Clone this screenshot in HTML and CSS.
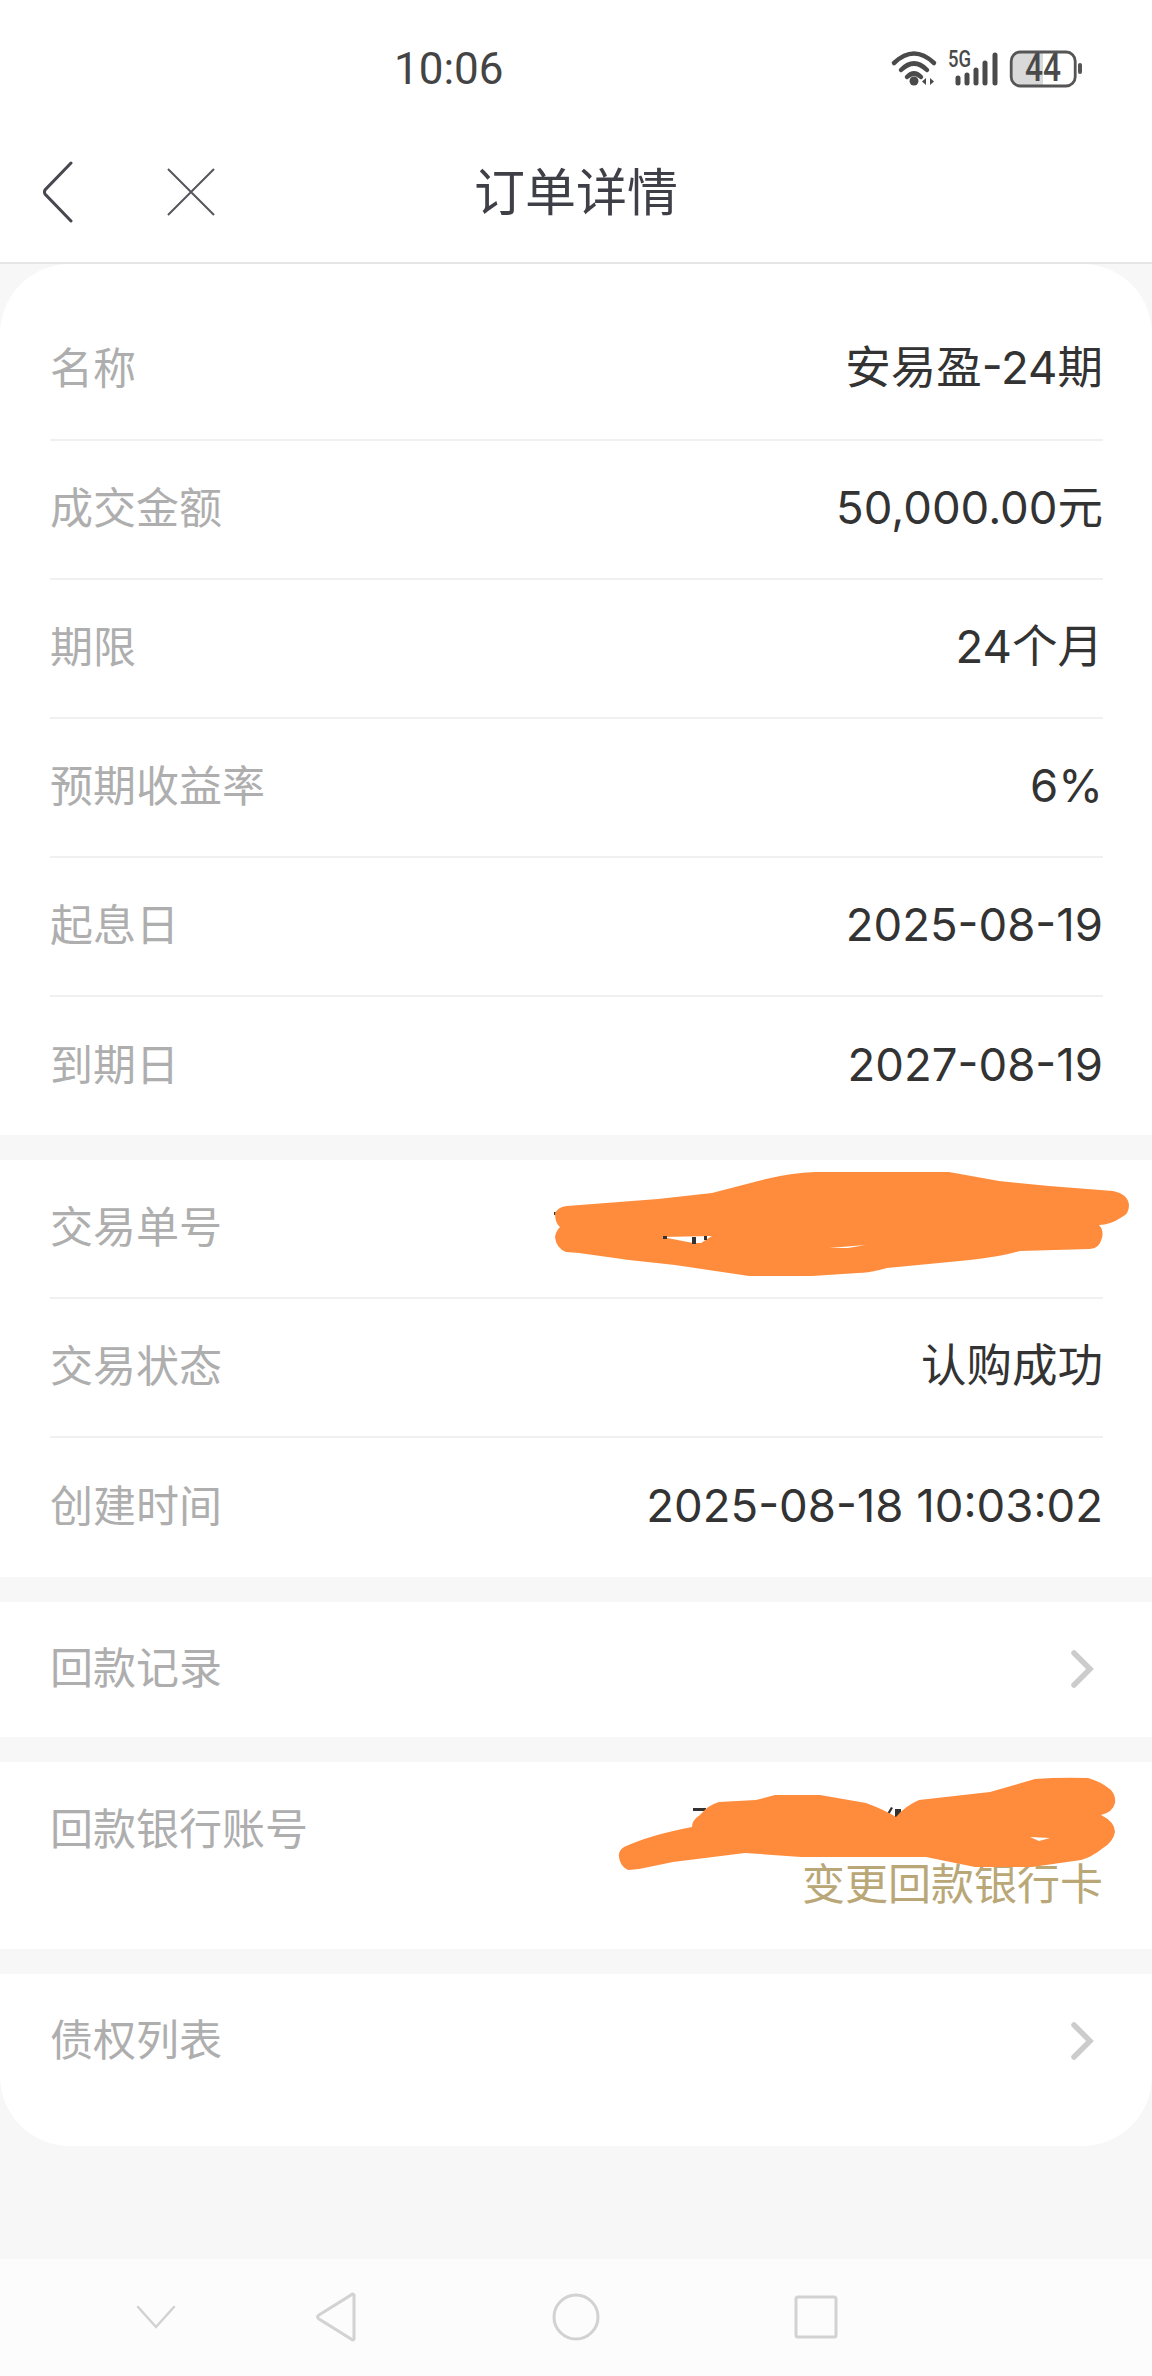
FILE: index.html
```html
<!DOCTYPE html>
<html lang="zh-CN">
<head>
  <meta charset="UTF-8">
  <meta name="viewport" content="width=device-width, initial-scale=1.0">
  <title>订单详情</title>
  <link rel="stylesheet" href="styles.css">
</head>
<body>
  <div class="page">
    <!-- status bar -->
    <div class="status-bar">
      <span class="clock">10:06</span>
      <svg class="status-icons" width="200" height="40" viewBox="0 0 200 40" xmlns="http://www.w3.org/2000/svg">
        <g fill="none" stroke="#4a4a4a" stroke-width="4.500" stroke-linecap="round">
          <path d="M3 14 Q23 -5 43 14"/>
          <path d="M10 21 Q23 8 36 21"/>
          <path d="M16 28 Q23 21 30 28"/>
        </g>
        <circle cx="23" cy="32" r="4.500" fill="#4a4a4a"/>
        <path d="M35 29v7l-4-3.500zM39 29v7l4-3.500z" fill="#4a4a4a"/>
        <text class="net-label" x="57" y="18" textLength="23" lengthAdjust="spacingAndGlyphs">5G</text>
        <g fill="none" stroke="#4a4a4a" stroke-width="5" stroke-linecap="round">
          <path d="M67 29v5M76 26v8M85 21v13M94 14v20M104 6v28"/>
        </g>
        <path d="M128 3h24v34h-24a8 8 0 0 1-8-8v-18a8 8 0 0 1 8-8z" fill="#d9d9d9"/>
        <rect x="120.200" y="3" width="64" height="34" rx="9" fill="none" stroke="#555" stroke-width="2.800"/>
        <rect x="187" y="14" width="4" height="11" rx="2" fill="#555"/>
        <text class="battery-label" x="152" y="32" text-anchor="middle" textLength="36" lengthAdjust="spacingAndGlyphs">44</text>
      </svg>
    </div>

    <!-- nav bar -->
    <div class="nav-bar">
      <div class="nav-left">
        <svg width="32" height="62" viewBox="0 0 32 62" xmlns="http://www.w3.org/2000/svg">
          <path d="M29 2 L3 29 Q2 31 3 33 L29 60" fill="none" stroke="#47474f" stroke-width="3" stroke-linecap="round"/>
        </svg>
        <svg class="nav-close" width="48" height="48" viewBox="0 0 48 48" xmlns="http://www.w3.org/2000/svg">
          <path d="M1 1 L47 47 M47 1 L1 47" stroke="#55555c" stroke-width="2"/>
        </svg>
      </div>
      <div class="nav-title">订单详情</div>
    </div>

    <!-- main card -->
    <div class="card">
      <div class="section section-first">
        <div class="row row-first"><span class="label">名称</span><span class="value">安易盈-24期</span></div>
        <div class="row"><span class="label">成交金额</span><span class="value">50,000.00元</span></div>
        <div class="row"><span class="label">期限</span><span class="value">24个月</span></div>
        <div class="row"><span class="label">预期收益率</span><span class="value">6%</span></div>
        <div class="row"><span class="label">起息日</span><span class="value">2025-08-19</span></div>
        <div class="row row-last"><span class="label">到期日</span><span class="value">2027-08-19</span></div>
      </div>
      <div class="section">
        <div class="row"><span class="label">交易单号</span></div>
        <div class="row"><span class="label">交易状态</span><span class="value">认购成功</span></div>
        <div class="row row-last"><span class="label">创建时间</span><span class="value">2025-08-18 10:03:02</span></div>
      </div>
      <div class="section">
        <div class="row row-last row-link">
          <span class="label">回款记录</span>
          <svg width="24" height="38" viewBox="0 0 24 38" xmlns="http://www.w3.org/2000/svg">
            <path d="M3 3 L19 19 L3 35" fill="none" stroke="#cccccc" stroke-width="5.500" stroke-linecap="round"/>
          </svg>
        </div>
      </div>
      <div class="section">
        <div class="row row-last row-bank">
          <span class="label">回款银行账号</span>
          <span class="change-link">变更回款银行卡</span>
        </div>
      </div>
      <div class="section section-end">
        <div class="row row-last row-link">
          <span class="label">债权列表</span>
          <svg width="24" height="38" viewBox="0 0 24 38" xmlns="http://www.w3.org/2000/svg">
            <path d="M3 3 L19 19 L3 35" fill="none" stroke="#cccccc" stroke-width="5.500" stroke-linecap="round"/>
          </svg>
        </div>
      </div>
    </div>

    <div class="spacer"></div>

    <!-- system nav -->
    <div class="sys-nav">
      <svg width="60" height="60" viewBox="0 0 60 60" xmlns="http://www.w3.org/2000/svg">
        <path d="M12 20 L30 40 L48 20" fill="none" stroke="#d2d2d2" stroke-width="2.500" stroke-linecap="round"/>
      </svg>
      <svg class="sys-gap-a" width="60" height="60" viewBox="0 0 60 60" xmlns="http://www.w3.org/2000/svg">
        <path d="M48 8 V52 Q47 54 45 52 L13 32 Q10 30 13 28 L45 8 Q47 6 48 8 Z" fill="none" stroke="#d2d2d2" stroke-width="3"/>
      </svg>
      <svg class="sys-gap-b" width="60" height="60" viewBox="0 0 60 60" xmlns="http://www.w3.org/2000/svg">
        <circle cx="30" cy="30" r="22" fill="none" stroke="#d2d2d2" stroke-width="3"/>
      </svg>
      <svg class="sys-gap-b" width="60" height="60" viewBox="0 0 60 60" xmlns="http://www.w3.org/2000/svg">
        <rect x="10" y="10" width="40" height="40" rx="2" fill="none" stroke="#d2d2d2" stroke-width="3"/>
      </svg>
    </div>

    <!-- hand drawn marks over the account numbers -->
    <svg class="scribbles" width="1152" height="2376" viewBox="0 0 1152 2376" xmlns="http://www.w3.org/2000/svg">
      <path d="M554 1212h8v3h-8zM693 1808h13v3h-13zM885 1817l6-10 2 1-6 10zM895 1809h6v8h-6z" fill="#333"/>
      <path class="scrib" d="M555 1213 Q558 1207 567 1206 L658 1199 L712 1193 L766 1179 Q790 1173 816 1172 L949 1172 L999 1181 L1049 1186 L1113 1191 Q1128 1194 1129 1205 Q1129 1214 1122 1217 Q1110 1225 1099 1225 Q1104 1230 1102 1238 Q1099 1249 1090 1249 L1020 1251 Q1000 1257 970 1260 L887 1268 Q870 1273 858 1273 L812 1276 L749 1276 L675 1265 L629 1260 L579 1253 L566 1252 Q556 1248 555 1237 Q556 1231 560 1227 Q555 1223 555 1213 Z"/>
      <path d="M662 1237 L712 1236 L701 1243 L693 1243 Z M829 1248 L866 1245 L848 1248 Z" fill="#fff"/>
      <path d="M663 1236h4v3h-4zM692 1237h4v7h-4zM704 1236h3v4h-3z" fill="#333"/>
      <path class="scrib" d="M619 1857 Q618 1851 624 1847 Q650 1835 692 1827 Q692 1820 700 1815 Q708 1805 719 1802 L756 1800 L775 1795 L820 1795 L866 1803 Q885 1810 896 1817 Q905 1806 919 1800 L990 1792 L1035 1779 Q1060 1777 1088 1778 Q1100 1781 1111 1790 Q1116 1796 1115 1803 Q1113 1812 1101 1815 Q1115 1822 1115 1832 Q1113 1842 1103 1848 Q1092 1857 1081 1860 L1032 1867 L975 1867 L926 1857 L801 1857 L745 1853 L673 1862 L639 1869 L628 1870 Q620 1866 619 1857 Z"/>
      <path d="M1030 1837 L1050 1838 L1039 1841 Z" fill="#fff"/>
    </svg>
  </div>
</body>
</html>
```

FILE: styles.css
```css
html, body {
  margin: 0;
  padding: 0;
}
body {
  background: #f7f7f7;
  font-family: Inter, "Noto Sans CJK SC", sans-serif;
}
.page {
  position: relative;
  width: 1152px;
  height: 2376px;
  display: flex;
  flex-direction: column;
  overflow: hidden;
}

/* status bar */
.status-bar {
  height: 90px;
  background: #fff;
  display: flex;
  align-items: flex-start;
  padding: 0 64px 0 394px;
  box-sizing: border-box;
}
.clock {
  font-family: Roboto, sans-serif;
  font-size: 44px;
  line-height: 50px;
  margin-top: 44px;
  color: #444;
}
.status-icons {
  margin-left: auto;
  margin-top: 49px;
  margin-right: -3px;
  overflow: visible;
}
.net-label {
  font-family: Roboto, sans-serif;
  font-size: 23px;
  font-weight: 500;
  fill: #4a4a4a;
}
.battery-label {
  font-family: Roboto, sans-serif;
  font-size: 38px;
  font-weight: 500;
  fill: #4a4a4a;
}

/* nav bar */
.nav-bar {
  height: 174px;
  box-sizing: border-box;
  background: #fff;
  border-bottom: 2px solid #e6e6e6;
  display: grid;
  grid-template-columns: 1fr auto 1fr;
  align-items: center;
  padding: 32px 42px 0;
}
.nav-left {
  display: flex;
  align-items: center;
}
.nav-close {
  margin-left: 93px;
}
.nav-title {
  font-size: 51px;
  line-height: 60px;
  color: #3f3f47;
  margin-top: 2px;
}

/* card */
.card {
  background: #f7f7f7;
  display: flex;
  flex-direction: column;
  gap: 25px;
}
.section {
  background: #fff;
  padding: 0 49px 0 50px;
}
.section-first {
  border-radius: 70px 70px 0 0;
}
.section-end {
  border-radius: 0 0 70px 70px;
}
.row {
  height: 139px;
  box-sizing: border-box;
  display: flex;
  align-items: center;
  justify-content: space-between;
  border-bottom: 2px solid #f0f0f0;
  font-size: 43px;
}
.row-first {
  height: 177px;
  padding-top: 36px;
}
.section-first .row-last {
  height: 138px;
}
.row-last {
  border-bottom: 0;
}
.row-link {
  height: 135px;
}
.section-end .row-link {
  height: 172px;
  padding-bottom: 37px;
}
.row-link svg {
  margin-right: 8px;
  margin-top: -2px;
}
.row-bank {
  height: 187px;
  flex-direction: column;
  align-items: stretch;
  justify-content: flex-start;
  padding-top: 44px;
}
.label {
  color: #aeaeae;
  line-height: 52px;
  margin-top: -3px;
}
.value {
  color: #333;
  font-size: 45.5px;
  line-height: 52px;
  margin-top: -3px;
}
.change-link {
  color: #b9a777;
  line-height: 52px;
  text-align: right;
  margin-top: 3px;
}

.spacer {
  flex: 1;
}

/* system nav */
.sys-nav {
  height: 117px;
  background: #fcfcfc;
  display: flex;
  align-items: flex-start;
  padding-left: 126px;
  padding-top: 28px;
  box-sizing: border-box;
}
.sys-gap-a {
  margin-left: 120px;
}
.sys-gap-b {
  margin-left: 180px;
}

/* marks drawn over the photo */
.scribbles {
  position: absolute;
  left: 0;
  top: 0;
  pointer-events: none;
}
.scrib {
  fill: #ff8c3c;
}
```
